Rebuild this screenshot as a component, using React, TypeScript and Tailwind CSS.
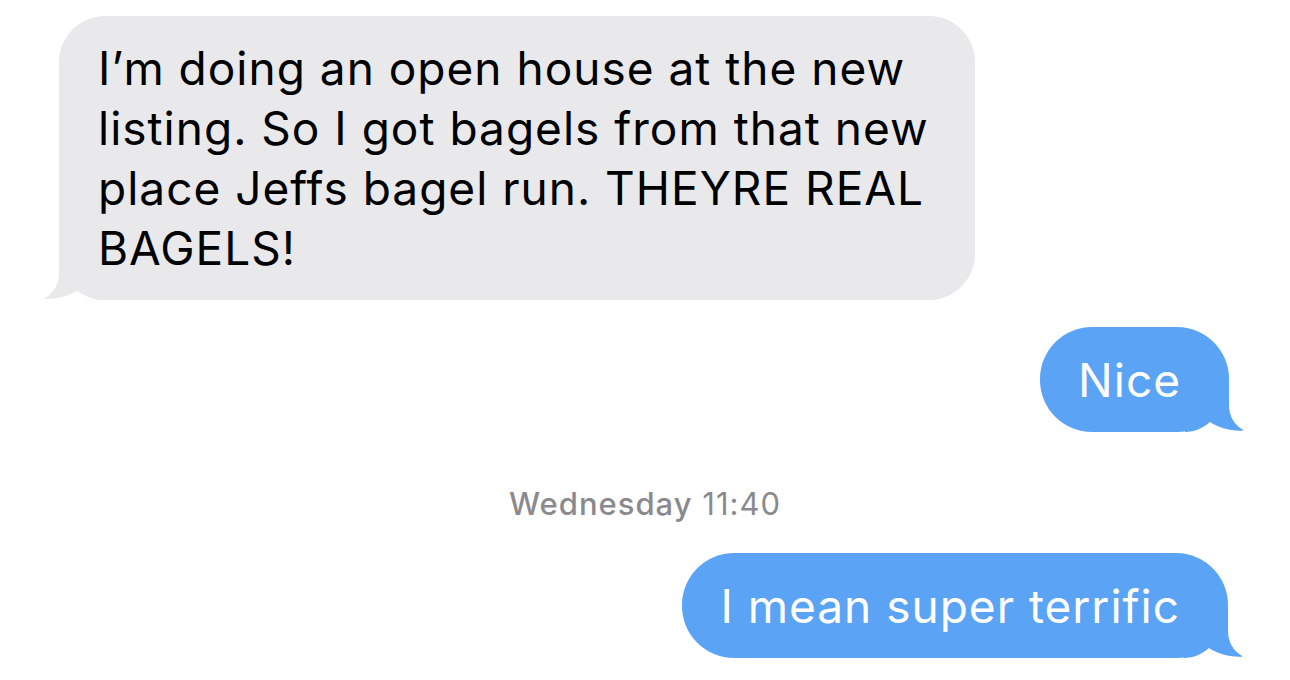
import React from "react";

// iMessage-style bubble tail; mirrored for outgoing messages
function Tail({ side, color }: { side: "left" | "right"; color: string }) {
  const pos = side === "left" ? "-left-[16px]" : "-right-[16px] -scale-x-100";
  return (
    <svg
      className={`absolute bottom-0 ${pos}`}
      width="60"
      height="50"
      viewBox="0 0 60 50"
    >
      <path
        d="M16 0 L16 23 C16 34 11 43 1 48.5 C14 49.5 26 46 35 40 C42 46 50 50 60 50 L60 0 Z"
        fill={color}
      />
    </svg>
  );
}

function Incoming({ lines }: { lines: string[] }) {
  return (
    <div className="relative w-[916px] rounded-[46px] bg-[#e9e9eb] py-[22px] pl-[39px] text-[46px] leading-[60px] text-black">
      <Tail side="left" color="#e9e9eb" />
      <p className="relative">
        {lines.map((l, i) => (
          <React.Fragment key={i}>
            {l}
            {i < lines.length - 1 && <br />}
          </React.Fragment>
        ))}
      </p>
    </div>
  );
}

function Outgoing({ text }: { text: string }) {
  return (
    <div className="relative flex h-[105px] items-center rounded-[52px] bg-[#5ba4f5] pl-[38px] pr-[48px] text-[46px] leading-[60px] text-white">
      <Tail side="right" color="#5ba4f5" />
      <span className="relative">{text}</span>
    </div>
  );
}

export default function App() {
  return (
    <div className="h-[680px] w-[1290px] overflow-hidden bg-white font-['Inter',sans-serif] tracking-[1px]">
      <div className="pl-[59px] pt-[16px]">
        <Incoming
          lines={[
            "I\u2019m doing an open house at the new",
            "listing. So I got bagels from that new",
            "place Jeffs bagel run. THEYRE REAL",
            "BAGELS!",
          ]}
        />
      </div>

      <div className="mt-[27px] flex justify-end pr-[61px]">
        <Outgoing text="Nice" />
      </div>

      <div className="mt-[52px] text-center text-[31px] leading-[40px] tracking-[1px] text-[#8a8a8e]">
        <span className="font-medium">Wednesday</span> 11:40
      </div>

      <div className="mt-[29px] flex justify-end pr-[62px]">
        <Outgoing text="I mean super terrific" />
      </div>
    </div>
  );
}
